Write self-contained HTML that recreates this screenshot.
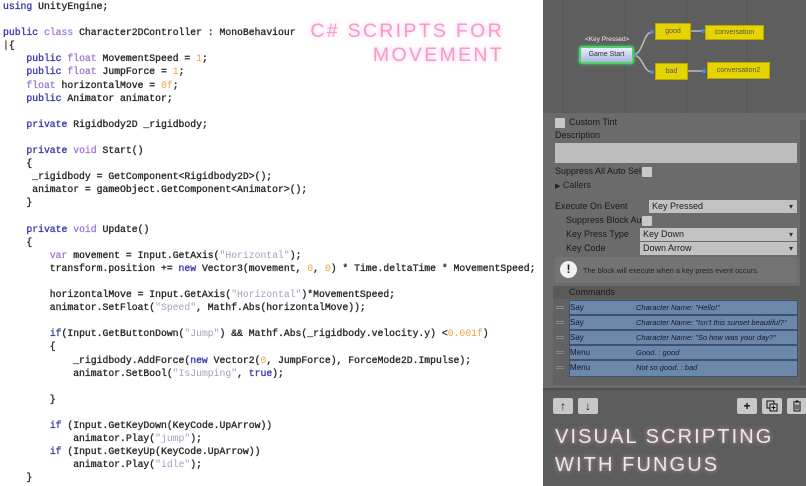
<!DOCTYPE html>
<html><head><meta charset="utf-8"><style>
*{margin:0;padding:0;box-sizing:border-box}
body{width:806px;height:486px;overflow:hidden;background:#fff;position:relative;font-family:"Liberation Sans",sans-serif}
#code{position:absolute;left:3px;top:0;font-family:"Liberation Mono",monospace;font-size:9.75px;line-height:13.1px;color:#2a2a2a;white-space:pre;-webkit-text-stroke:0.35px #2a2a2a}
.k{color:#3a3ab0;-webkit-text-stroke:0.35px #3a3ab0}
.p{color:#9a6fd0;-webkit-text-stroke:0.2px #9a6fd0}
.n{color:#f0a040;-webkit-text-stroke:0}
.s{color:#a0a0c0;-webkit-text-stroke:0}
#cs{position:absolute;right:302px;top:19px;text-align:right;color:#f59acb;font-size:19.5px;letter-spacing:2.3px;line-height:24px;white-space:nowrap;text-shadow:0 0 5px rgba(255,150,210,.6)}
#rp{position:absolute;left:543px;top:0;width:263px;height:486px;background:#6b6b6b}
.a{position:absolute}
#graph{left:0;top:0;width:263px;height:113px;background:#5e5e5e}
.vl{position:absolute;top:0;width:1px;height:113px;background:#555}
.node{position:absolute;background:#e6d400;border:1px solid #b8a800;font-size:7px;color:#555;text-align:center}
.lbl{position:absolute;font-size:9px;color:#1a1a1a;white-space:nowrap}
.cb{position:absolute;width:10px;height:10px;background:#c9c9c9;border-radius:1px}
.dd{position:absolute;height:13px;background:#c2c2c2;font-size:9px;color:#1a1a1a;padding-left:3px;line-height:13px}
.dd:after{content:"▾";position:absolute;right:4px;font-size:8px;color:#333}
.row{position:absolute;left:26px;width:229px;height:15px;background:#6b88ab;border:1px solid #3e5270;font-size:8px;line-height:13px;color:#141a28;white-space:nowrap}
.row i{position:absolute;left:66px;font-size:7.5px}
.grip{position:absolute;left:13px;width:8px;height:3px;border-top:1px solid #888;border-bottom:1px solid #888}
.btn{position:absolute;top:398px;width:20px;height:16px;background:#c8c8c8;border-radius:2px;font-size:12px;text-align:center;line-height:16px;color:#111;font-weight:bold}
#vs{position:absolute;left:12px;top:423px;color:#f3e3ec;font-size:20px;letter-spacing:2.1px;line-height:28px;white-space:nowrap;text-shadow:0 0 5px rgba(255,200,230,.6)}
</style></head><body>
<div id="code"><span class="k">using</span> UnityEngine;

<span class="k">public</span> <span class="p">class</span> Character2DController : MonoBehaviour
<span style="color:#c33">|</span>{
    <span class="k">public</span> <span class="p">float</span> MovementSpeed = <span class="n">1</span>;
    <span class="k">public</span> <span class="p">float</span> JumpForce = <span class="n">1</span>;
    <span class="p">float</span> horizontalMove = <span class="n">0f</span>;
    <span class="k">public</span> Animator animator;

    <span class="k">private</span> Rigidbody2D _rigidbody;

    <span class="k">private</span> <span class="p">void</span> Start()
    {
     _rigidbody = GetComponent&lt;Rigidbody2D&gt;();
     animator = gameObject.GetComponent&lt;Animator&gt;();
    }

    <span class="k">private</span> <span class="p">void</span> Update()
    {
        <span class="p">var</span> movement = Input.GetAxis(<span class="s">"Horizontal"</span>);
        transform.position += <span class="k">new</span> Vector3(movement, <span class="n">0</span>, <span class="n">0</span>) * Time.deltaTime * MovementSpeed;

        horizontalMove = Input.GetAxis(<span class="s">"Horizontal"</span>)*MovementSpeed;
        animator.SetFloat(<span class="s">"Speed"</span>, Mathf.Abs(horizontalMove));

        <span class="k">if</span>(Input.GetButtonDown(<span class="s">"Jump"</span>) &amp;&amp; Mathf.Abs(_rigidbody.velocity.y) &lt;<span class="n">0.001f</span>)
        {
            _rigidbody.AddForce(<span class="k">new</span> Vector2(<span class="n">0</span>, JumpForce), ForceMode2D.Impulse);
            animator.SetBool(<span class="s">"IsJumping"</span>, <span class="k">true</span>);

        }

        <span class="k">if</span> (Input.GetKeyDown(KeyCode.UpArrow))
            animator.Play(<span class="s">"jump"</span>);
        <span class="k">if</span> (Input.GetKeyUp(KeyCode.UpArrow))
            animator.Play(<span class="s">"idle"</span>);
    }</div>
<div id="cs">C# SCRIPTS FOR<br>MOVEMENT</div>

<div id="rp">
 <div id="graph" class="a">
  <div class="vl" style="left:20px"></div><div class="vl" style="left:82px"></div><div class="vl" style="left:143px"></div><div class="vl" style="left:204px"></div>
  <svg class="a" style="left:0;top:0" width="263" height="113">
   <path d="M90 55 C100 55,100 32,109 32" stroke="#bbb" fill="none" stroke-width="1.5"/>
   <path d="M90 55 C100 55,100 72,109 72" stroke="#bbb" fill="none" stroke-width="1.5"/>
   <path d="M146 31 H160 M143 71 H161" stroke="#bbb" stroke-width="1.5"/>
   <circle cx="91" cy="55" r="2" fill="#4a8ae0"/><circle cx="109" cy="32" r="2" fill="#4a8ae0"/><circle cx="109" cy="72" r="2" fill="#4a8ae0"/>
   <circle cx="146" cy="31" r="2" fill="#4a8ae0"/><circle cx="143" cy="71" r="2" fill="#4a8ae0"/><circle cx="160" cy="31" r="2" fill="#4a8ae0"/><circle cx="161" cy="71" r="2" fill="#4a8ae0"/>
  </svg>
  <div class="a" style="left:42px;top:36px;font-size:6.5px;color:#eee">&lt;Key Pressed&gt;</div>
  <div class="a" style="left:36px;top:46px;width:55px;height:18px;background:linear-gradient(#e8f0ff,#aab8d8);border:2px solid #4ed06a;border-radius:3px;font-size:7px;color:#333;text-align:center;line-height:14px;box-shadow:0 0 3px #4ed06a">Game Start</div>
  <div class="node" style="left:112px;top:23px;width:36px;height:17px;line-height:15px">good</div>
  <div class="node" style="left:162px;top:25px;width:59px;height:15px;line-height:13px">conversation</div>
  <div class="node" style="left:112px;top:63px;width:33px;height:17px;line-height:15px">bad</div>
  <div class="node" style="left:164px;top:62px;width:63px;height:17px;line-height:15px">conversation2</div>
 </div>
 <div class="a" style="left:257px;top:120px;width:6px;height:265px;background:#5a5a5a"></div>
 <div class="cb" style="left:12px;top:118px"></div><div class="lbl" style="left:26px;top:117px">Custom Tint</div>
 <div class="lbl" style="left:12px;top:130px">Description</div>
 <div class="a" style="left:12px;top:143px;width:242px;height:20px;background:#bdbdbd"></div>
 <div class="lbl" style="left:12px;top:166px">Suppress All Auto Sel</div><div class="cb" style="left:99px;top:167px"></div>
 <div class="lbl" style="left:12px;top:180px;color:#222"><span style="font-size:7px">▶</span> Callers</div>
 <div class="lbl" style="left:12px;top:201px">Execute On Event</div><div class="dd" style="left:106px;top:200px;width:148px">Key Pressed</div>
 <div class="lbl" style="left:23px;top:215px">Suppress Block Au</div><div class="cb" style="left:99px;top:216px"></div>
 <div class="lbl" style="left:23px;top:229px">Key Press Type</div><div class="dd" style="left:97px;top:228px;width:157px">Key Down</div>
 <div class="lbl" style="left:23px;top:243px">Key Code</div><div class="dd" style="left:97px;top:242px;width:157px">Down Arrow</div>
 <div class="a" style="left:12px;top:257px;width:242px;height:26px;background:#737373;border-radius:2px"></div>
 <div class="a" style="left:17px;top:261px;width:17px;height:17px;border-radius:50%;background:#f2f2f2;color:#222;font-weight:bold;font-size:12px;text-align:center;line-height:17px">!</div>
 <div class="a" style="left:40px;top:266px;font-size:7.3px;color:#222;white-space:nowrap">The block will execute when a key press event occurs.</div>
 <div class="a" style="left:10px;top:286px;width:247px;height:99px;background:#626262"></div>
 <div class="a" style="left:10px;top:286px;width:247px;height:13px;background:#5a5a5a"></div>
 <div class="lbl" style="left:26px;top:287px;color:#1a1a1a">Commands</div>
 <div class="row" style="top:300px">Say<i>Character Name: "Hello!"</i></div>
 <div class="row" style="top:315px">Say<i>Character Name: "Isn't this sunset beautiful?"</i></div>
 <div class="row" style="top:330px">Say<i>Character Name: "So how was your day?"</i></div>
 <div class="row" style="top:345px">Menu<i>Good. : good</i></div>
 <div class="row" style="top:360px;height:17px">Menu<i>Not so good. : bad</i></div>
 <div class="grip" style="top:306px"></div><div class="grip" style="top:321px"></div><div class="grip" style="top:336px"></div><div class="grip" style="top:351px"></div><div class="grip" style="top:366px"></div>
 <div class="a" style="left:0;top:388px;width:263px;height:98px;background:#5d5d5d;border-top:2px solid #4e4e4e"></div>
 <div class="btn" style="left:10px">&#8593;</div><div class="btn" style="left:35px">&#8595;</div>
 <div class="btn" style="left:194px">+</div>
 <div class="btn" style="left:219px"><svg width="12" height="12" viewBox="0 0 12 12" style="margin-top:2px"><rect x="1" y="1" width="7" height="7" fill="none" stroke="#111"/><rect x="4" y="4" width="7" height="7" fill="#c8c8c8" stroke="#111"/><path d="M7.5 5.5v4M5.5 7.5h4" stroke="#111"/></svg></div>
 <div class="btn" style="left:244px"><svg width="10" height="12" viewBox="0 0 10 12" style="margin-top:2px"><path d="M1 2h8M3.5 1h3M2 3v8h6V3M4 4.5v5M6 4.5v5" stroke="#111" fill="none"/></svg></div>
 <div id="vs">VISUAL SCRIPTING<br>WITH FUNGUS</div>
</div>
</body></html>
